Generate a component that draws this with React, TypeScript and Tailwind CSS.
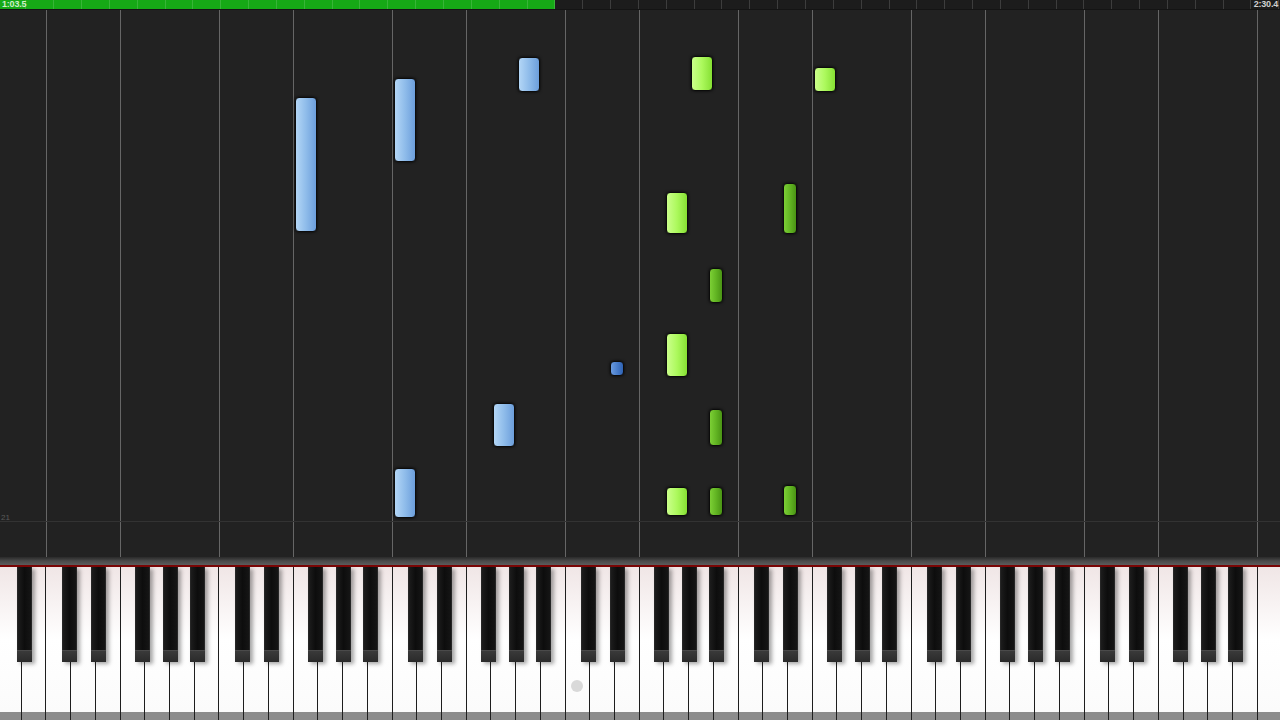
import React from "react";

// 52 white keys, A0 starts 3px left of the screen edge
const W = 173 / 7;
const X0 = -3;

type NoteKind = "white" | "black";
type Hand = "left" | "right";

type Note = { key: number; kind: NoteKind; hand: Hand; top: number; bottom: number; offset?: number };

// key = white key index (for black keys: index of the white key to the right)
const notes: Note[] = [
  { key: 12, kind: "white", hand: "left", top: 97, bottom: 232 },
  { key: 16, kind: "white", hand: "left", top: 78, bottom: 162 },
  { key: 21, kind: "white", hand: "left", top: 57, bottom: 92 },
  { key: 20, kind: "white", hand: "left", top: 403, bottom: 447 },
  { key: 16, kind: "white", hand: "left", top: 468, bottom: 518 },
  { key: 25, kind: "black", hand: "left", top: 361, bottom: 376, offset: 2.5 },
  { key: 28, kind: "white", hand: "right", top: 56, bottom: 91 },
  { key: 33, kind: "white", hand: "right", top: 67, bottom: 92 },
  { key: 27, kind: "white", hand: "right", top: 192, bottom: 234 },
  { key: 27, kind: "white", hand: "right", top: 333, bottom: 377 },
  { key: 27, kind: "white", hand: "right", top: 487, bottom: 516 },
  { key: 32, kind: "black", hand: "right", top: 183, bottom: 234, offset: 2.5 },
  { key: 32, kind: "black", hand: "right", top: 485, bottom: 516, offset: 2.5 },
  { key: 29, kind: "black", hand: "right", top: 268, bottom: 303, offset: 2.5 },
  { key: 29, kind: "black", hand: "right", top: 409, bottom: 446, offset: 2.5 },
  { key: 29, kind: "black", hand: "right", top: 487, bottom: 516, offset: 2.5 },
];

const noteStyles: Record<string, string> = {
  "white-left": "bg-linear-to-r from-[#b3d6f6] via-[#8fbcea] to-[#6c9edb]",
  "black-left": "bg-linear-to-r from-[#6a9be0] via-[#4a7fcc] to-[#2f62b3]",
  "white-right": "bg-linear-to-r from-[#cbff8a] via-[#acf95c] to-[#86e032]",
  "black-right": "bg-linear-to-r from-[#7ccf35] via-[#62b523] to-[#4a9414]",
};

// black keys: boundary white index + horizontal offset
const blackKeys: { b: number; off: number }[] = [{ b: 1, off: 2.8 }];
for (let c = 2; c <= 44; c += 7) {
  blackKeys.push({ b: c + 1, off: -2 });
  blackKeys.push({ b: c + 2, off: 2.5 });
  blackKeys.push({ b: c + 4, off: -2.5 });
  blackKeys.push({ b: c + 5, off: 0 });
  blackKeys.push({ b: c + 6, off: 2.5 });
}

const whiteKeys = Array.from({ length: 52 }, (_, i) => i);
const ticks = Array.from({ length: 47 }, (_, i) => i);

function ProgressBar() {
  return (
    <div className="relative flex h-[9px] bg-[#1c1c1c]" style={{ fontFamily: '"Liberation Sans", Arial, sans-serif' }}>
      <div className="w-[555px] bg-[#16a916]" />
      <div className="absolute inset-0 ml-[-1.5px] flex">
        {ticks.map((t) => (
          <div key={t} className="h-full w-[27.85px] shrink-0 border-r border-white/15" />
        ))}
      </div>
      <span className="absolute left-[2px] top-0 text-[9px] font-bold leading-[9px] tracking-[-0.2px] text-[#cdeec6]">1:03.5</span>
      <span className="absolute right-[2px] top-0 text-[9px] font-bold leading-[9px] tracking-[-0.2px] text-[#d0d0d0]">2:30.4</span>
    </div>
  );
}

function NoteArea() {
  return (
    <div className="relative h-[547px] overflow-hidden bg-[#222222]">
      <div className="ml-[-3px] flex h-full w-[1285px]">
        {whiteKeys.map((i) => (
          <div
            key={i}
            className={i % 7 === 2 || i % 7 === 5 ? "h-full flex-1 border-l border-[#666666]" : "h-full flex-1"}
          />
        ))}
      </div>
      <div className="absolute left-0 right-0 top-[511px] h-px bg-[#333333]" />
      <span
        className="absolute left-px top-[502px] text-[8px] text-[#5a5a5a]"
        style={{ fontFamily: '"Liberation Sans", Arial, sans-serif' }}
      >
        21
      </span>
      {notes.map((n, idx) => {
        const left =
          n.kind === "white" ? X0 + n.key * W + 1.5 : X0 + n.key * W + (n.offset ?? 0) - 7;
        const width = n.kind === "white" ? 22 : 14;
        return (
          <div
            key={idx}
            className={`absolute rounded-[4px] border border-[#0c0c0c] shadow-[0_0_3px_rgba(0,0,0,0.9)] ${noteStyles[n.kind + "-" + n.hand]}`}
            style={{ left, width, top: n.top - 10, height: n.bottom - n.top }}
          />
        );
      })}
    </div>
  );
}

function Keyboard() {
  return (
    <div className="flex flex-col">
      <div className="h-[8px] bg-linear-to-b from-[#2a2a2a] via-[#4a4a4a] to-[#5c5c5c]" />
      <div className="h-[2px] bg-[#7a0505]" />
      <div className="relative h-[153px] overflow-hidden">
        <div className="ml-[-3px] flex h-full w-[1285px]">
          {whiteKeys.map((i) => (
            <div key={i} className="flex h-full flex-1 flex-col border-r border-[#1e1e1e]">
              <div className="flex flex-1 flex-col items-center justify-end bg-linear-to-b from-[#f0e6e6] via-white to-[#fbfbfb] pb-[20px]">
                {i === 23 && <div className="h-[12px] w-[12px] rounded-full bg-[#d9d9d9]" />}
              </div>
              <div className="h-[8px] bg-[#8c8c8c]" />
            </div>
          ))}
        </div>
        {blackKeys.map((k) => (
          <div
            key={k.b}
            className="absolute top-0 flex h-[95px] w-[15px] flex-col shadow-[3px_2px_4px_rgba(0,0,0,0.35)]"
            style={{ left: X0 + k.b * W + k.off - 7.5 }}
          >
            <div className="flex-1 border-x border-[#262626] bg-linear-to-r from-[#1c1c1c] via-[#0d0d0d] to-[#151515]" />
            <div className="h-[12px] border-t border-[#4a4a4a] bg-linear-to-b from-[#3a3a3a] to-[#2a2a2a]" />
          </div>
        ))}
      </div>
    </div>
  );
}

export default function App() {
  return (
    <div className="flex h-[720px] w-[1280px] flex-col overflow-hidden bg-[#222222]">
      <ProgressBar />
      <div className="h-px bg-[#141414]" />
      <NoteArea />
      <Keyboard />
    </div>
  );
}
